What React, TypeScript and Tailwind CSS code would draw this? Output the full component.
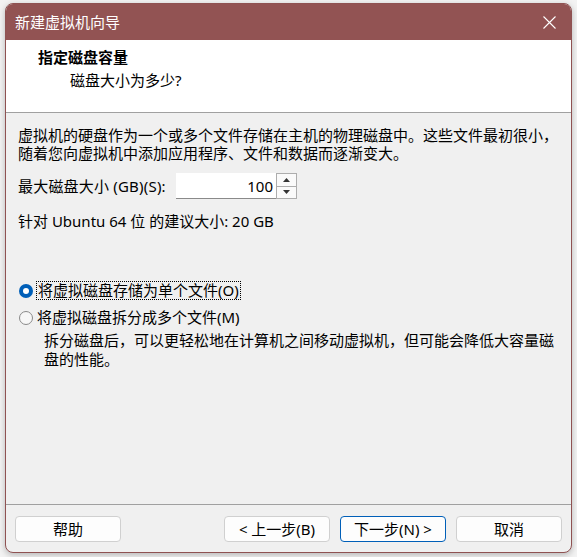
import React from "react";

const font = "font-['Noto_Sans','Noto_Sans_CJK_SC',sans-serif]";

function Radio({ checked }: { checked: boolean }) {
  if (checked) {
    return (
      <span className="flex h-[14px] w-[14px] shrink-0 items-center justify-center rounded-full bg-[#005fb8]">
        <span className="h-[6px] w-[6px] rounded-full bg-white" />
      </span>
    );
  }
  return (
    <span className="h-[14px] w-[14px] shrink-0 rounded-full border border-[#8a8a8a] bg-[#f7f7f7]" />
  );
}

function Btn({
  children,
  primary,
}: {
  children: React.ReactNode;
  primary?: boolean;
}) {
  return (
    <button
      className={
        primary
          ? "flex h-[26px] w-[106px] items-center justify-center rounded-[4px] border border-[#005fb8] bg-[#fdfdfd] text-[15px] leading-none text-black"
          : "flex h-[26px] w-[106px] items-center justify-center rounded-[4px] border border-[#d0d0d0] bg-[#fdfdfd] text-[15px] leading-none text-black"
      }
    >
      {children}
    </button>
  );
}

export default function App() {
  return (
    <div
      className={`${font} h-[557px] w-[577px] overflow-hidden bg-[#f3f3f3] pl-[5px] pt-[3px]`}
    >
      <div className="flex h-[550px] w-[567px] flex-col overflow-hidden rounded-[8px] border border-[#8f5252] bg-[#f0f0f0] shadow-[0_2px_6px_rgba(0,0,0,0.25)]">
        {/* title bar */}
        <div className="flex h-[36px] shrink-0 items-center justify-between bg-[#925353] pl-[9px] pr-[14px]">
          <span className="text-[15px] leading-none text-white">新建虚拟机向导</span>
          <svg width="13" height="13" viewBox="0 0 13 13" className="mr-[1px]">
            <path d="M0.5 0.5 L12.5 12.5 M12.5 0.5 L0.5 12.5" stroke="#ffffff" strokeWidth="1.1" fill="none" />
          </svg>
        </div>

        {/* header */}
        <div className="flex h-[73px] shrink-0 flex-col border-b border-[#a0a0a0] bg-white pl-[32px] pt-[7px]">
          <div className="text-[15px] font-bold leading-[20px] text-black">指定磁盘容量</div>
          <div className="pl-[32px] pt-[3px] text-[15px] leading-[20px] text-black">
            磁盘大小为多少?
          </div>
        </div>

        {/* body */}
        <div className="flex flex-1 flex-col pl-[12px] pt-[13px] text-[15px] leading-[18px] text-black">
          <p>
            虚拟机的硬盘作为一个或多个文件存储在主机的物理磁盘中。这些文件最初很小，
            <br />
            随着您向虚拟机中添加应用程序、文件和数据而逐渐变大。
          </p>

          <div className="mt-[11px] flex items-center">
            <span className="w-[158px] tracking-[0.2px]">最大磁盘大小 (GB)(S):</span>
            <div className="flex h-[26px]">
              <div className="flex w-[100px] items-center justify-end border-b border-[#8a8a8a] bg-white pr-[3px]">
                100
              </div>
              <div className="flex w-[21px] flex-col border border-[#adadad] bg-[#f0f0f0]">
                <div className="flex flex-1 items-center justify-center border-b border-[#adadad] bg-[#fafafa]">
                  <svg width="7" height="4" viewBox="0 0 7 4">
                    <path d="M0 4 L3.5 0 L7 4 Z" fill="#333" />
                  </svg>
                </div>
                <div className="flex flex-1 items-center justify-center bg-[#fafafa]">
                  <svg width="7" height="4" viewBox="0 0 7 4">
                    <path d="M0 0 L3.5 4 L7 0 Z" fill="#333" />
                  </svg>
                </div>
              </div>
            </div>
          </div>

          <div className="mt-[13px]">针对 Ubuntu 64 位 的建议大小: 20 GB</div>

          <div className="mt-[51px] flex items-center gap-[3px] pl-[1px]">
            <Radio checked />
            <span className="border border-dotted border-black px-[1px] leading-[17px]">
              将虚拟磁盘存储为单个文件(O)
            </span>
          </div>
          <div className="mt-[8px] flex items-center gap-[4px] pl-[1px]">
            <Radio checked={false} />
            <span className="leading-[19px]">将虚拟磁盘拆分成多个文件(M)</span>
          </div>
          <p className="mt-[4px] pl-[26px] leading-[19px]">
            拆分磁盘后，可以更轻松地在计算机之间移动虚拟机，但可能会降低大容量磁
            <br />
            盘的性能。
          </p>
        </div>

        {/* footer */}
        <div className="flex h-[48px] shrink-0 items-start border-t border-[#a0a0a0] px-[9px] pt-[11px]">
          <Btn>帮助</Btn>
          <div className="flex-1" />
          <div className="flex gap-[10px]">
            <Btn>&lt; 上一步(B)</Btn>
            <Btn primary>下一步(N) &gt;</Btn>
            <Btn>取消</Btn>
          </div>
        </div>
      </div>
    </div>
  );
}
